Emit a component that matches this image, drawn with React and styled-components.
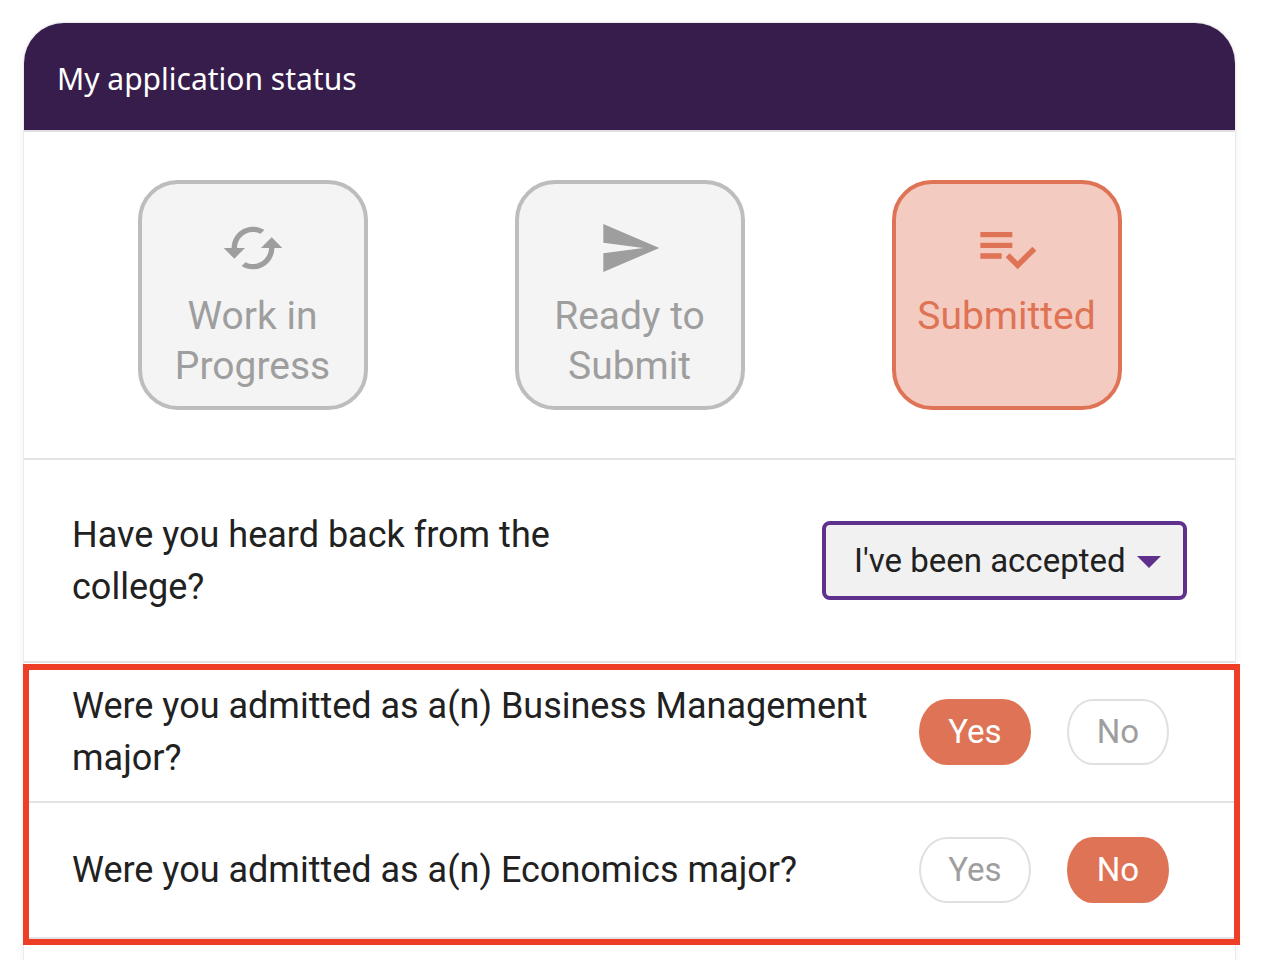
import React, { useState } from "react";
import styled, { createGlobalStyle } from "styled-components";

const GlobalStyle = createGlobalStyle`
    * {
        box-sizing: border-box;
    }

    body {
        margin: 0;
        background: #ffffff;
        color: #212121;
        font-family: Roboto, "Liberation Sans", sans-serif;
    }

    button,
    select {
        font-family: inherit;
    }
`;

const Page = styled.main`
    display: flex;
    min-height: 100vh;
    padding: 23px 29px 0 24px;
`;

const Card = styled.section`
    flex: 1;
    min-width: 0;
    border-radius: 40px 40px 0 0;
    box-shadow: 0 0 0 1px #ebebeb, 0 2px 8px rgba(0, 0, 0, 0.08);
`;

const CardHeader = styled.header`
    padding: 35px 33px 30px;
    border-radius: 40px 40px 0 0;
    background: #361d4b;
    color: #ffffff;
`;

const CardTitle = styled.h1`
    margin: 0;
    font-family: "Noto Sans", sans-serif;
    font-size: 30px;
    font-weight: 400;
    line-height: 42px;
`;

const StatusRow = styled.div`
    display: flex;
    justify-content: space-around;
    padding: 48px 40px;
    border-top: 2px solid #e0dde3;
    border-bottom: 2px solid #e3e3e5;
`;

const StatusButton = styled.button`
    display: flex;
    flex-direction: column;
    align-items: center;
    gap: 11px;
    width: 230px;
    height: 230px;
    padding: 32px 16px 0;
    border: 4px solid ${(props) => (props.$active ? "#df7355" : "#bdbdbd")};
    border-radius: 40px;
    background: ${(props) => (props.$active ? "#f4cbc0" : "#f4f4f4")};
    color: ${(props) => (props.$active ? "#df7355" : "#9e9e9e")};
    font-size: 39px;
    line-height: 50px;
    text-align: center;
    cursor: pointer;
`;

const StatusIcon = styled.svg`
    flex: none;
    width: 64px;
    height: 64px;
    fill: currentColor;
`;

const DecisionRow = styled.div`
    display: flex;
    align-items: center;
    justify-content: space-between;
    min-height: 203px;
    padding: 32px 48px;
    border-bottom: 2px solid #e3e3e5;
`;

const Question = styled.label`
    max-width: 50%;
    font-size: 36px;
    line-height: 52px;
`;

const SelectBox = styled.div`
    position: relative;
`;

const Select = styled.select`
    display: block;
    width: 365px;
    height: 79px;
    padding: 0 52px 0 28px;
    border: 4px solid #5f308c;
    border-radius: 8px;
    background: #f1f1f1;
    color: #212121;
    font-size: 33px;
    appearance: none;
`;

const Caret = styled.svg`
    position: absolute;
    top: 35px;
    right: 26px;
    width: 24px;
    height: 12px;
    fill: #5f308c;
    pointer-events: none;
`;

// red frame drawn over the group of major questions
const MajorList = styled.div`
    position: relative;

    &::after {
        content: "";
        position: absolute;
        inset: 1px -5px -6px -1px;
        border: 6px solid #ee3e26;
        pointer-events: none;
    }
`;

const MajorRow = styled.div`
    display: flex;
    align-items: center;
    justify-content: space-between;
    gap: 36px;
    min-height: 136px;
    padding: 17px 66px 17px 48px;
    border-bottom: 2px solid #e3e3e5;
`;

const MajorQuestion = styled.p`
    margin: 0;
    font-size: 36px;
    line-height: 52px;
`;

const Answers = styled.div`
    display: flex;
    flex: none;
    gap: 36px;
`;

const Pill = styled.button`
    width: ${(props) => (props.$wide ? 112 : 102)}px;
    height: 66px;
    padding: 0 0 2px;
    border: 2px solid ${(props) => (props.$active ? "#df7355" : "#e0e0e0")};
    border-radius: 25% / 50%;
    background: ${(props) => (props.$active ? "#df7355" : "#ffffff")};
    color: ${(props) => (props.$active ? "#ffffff" : "#9e9e9e")};
    font-size: 33px;
    cursor: pointer;
`;

const statuses = [
    {
        label: "Work in Progress",
        icon: "M19 8l-4 4h3c0 3.31-2.69 6-6 6-1.01 0-1.97-.25-2.8-.7l-1.46 1.46C8.97 19.54 10.43 20 12 20c4.42 0 8-3.58 8-8h3l-4-4zM6 12c0-3.31 2.69-6 6-6 1.01 0 1.97.25 2.8.7l1.46-1.46C15.03 4.46 13.57 4 12 4c-4.42 0-8 3.58-8 8H1l4 4 4-4H6z",
    },
    {
        label: "Ready to Submit",
        icon: "M2 21l21-9L2 3v7l15 2-15 2v7z",
    },
    {
        label: "Submitted",
        icon: "M14 10H2v2h12v-2zm0-4H2v2h12V6zM2 16h8v-2H2v2zm19.5-4.5L23 13l-6.99 7-4.51-4.5L13 14l3.01 3 5.49-5.5z",
    },
];

const Major = ({ name, initial }) => {
    const [answer, setAnswer] = useState(initial);

    return (
        <MajorRow>
            <MajorQuestion>Were you admitted as a(n) {name} major?</MajorQuestion>
            <Answers role="group" aria-label={name}>
                <Pill
                    type="button"
                    $wide
                    $active={answer === "Yes"}
                    aria-pressed={answer === "Yes"}
                    onClick={() => setAnswer("Yes")}
                >
                    Yes
                </Pill>
                <Pill
                    type="button"
                    $active={answer === "No"}
                    aria-pressed={answer === "No"}
                    onClick={() => setAnswer("No")}
                >
                    No
                </Pill>
            </Answers>
        </MajorRow>
    );
};

const App = () => {
    const [status, setStatus] = useState("Submitted");

    return (
        <React.Fragment>
            <GlobalStyle />
            <Page>
                <Card>
                    <CardHeader>
                        <CardTitle>My application status</CardTitle>
                    </CardHeader>
                    <StatusRow>
                        {statuses.map(({ label, icon }) => (
                            <StatusButton
                                key={label}
                                type="button"
                                $active={status === label}
                                aria-pressed={status === label}
                                onClick={() => setStatus(label)}
                            >
                                <StatusIcon viewBox="0 0 24 24" aria-hidden="true">
                                    <path d={icon} />
                                </StatusIcon>
                                {label}
                            </StatusButton>
                        ))}
                    </StatusRow>
                    <DecisionRow>
                        <Question htmlFor="decision">Have you heard back from the college?</Question>
                        <SelectBox>
                            <Select id="decision" defaultValue="accepted">
                                <option value="accepted">I've been accepted</option>
                                <option value="waitlisted">I've been waitlisted</option>
                                <option value="denied">I've been denied</option>
                            </Select>
                            <Caret viewBox="0 0 24 12" aria-hidden="true">
                                <path d="M0 0h24L12 12z" />
                            </Caret>
                        </SelectBox>
                    </DecisionRow>
                    <MajorList>
                        <Major name="Business Management" initial="Yes" />
                        <Major name="Economics" initial="No" />
                    </MajorList>
                </Card>
            </Page>
        </React.Fragment>
    );
};

export default App;
